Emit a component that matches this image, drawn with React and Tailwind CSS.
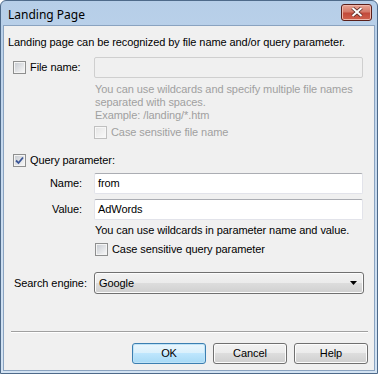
import React from 'react';

const Check = ({ checked = false, disabled = false }) => (
  <span
    className={`w-[13px] h-[13px] shrink-0 border p-[1px] flex ${
      disabled ? 'border-[#c0c0c0] bg-[#f7f7f7]' : 'border-[#8e8f8f] bg-[#f4f4f4]'
    }`}
  >
    <span
      className={`flex-1 flex items-center justify-center ${
        disabled
          ? 'bg-gradient-to-br from-[#e6e6e6] to-[#f8f8f8]'
          : 'bg-gradient-to-br from-[#c9cdd3] to-[#f6f6f6]'
      }`}
    >
      {checked && (
        <svg width="9" height="9" viewBox="0 0 9 9">
          <path d="M1 4.5 L3.5 7 L8 1.5" fill="none" stroke="#3b5697" strokeWidth="1.8" />
        </svg>
      )}
    </span>
  </span>
);

const TextBox = ({ value = '', disabled = false }) => (
  <div
    className={`w-[269px] h-[21px] rounded-[2px] border px-[3px] flex items-center ${
      disabled
        ? 'bg-[#f0f0f0] border-[#cfcfcf]'
        : 'bg-white border-[#e2e3ea] border-t-[#abadb3]'
    }`}
  >
    <span className="text-[11px] text-black leading-none">{value}</span>
  </div>
);

const Button = ({ children, def = false }) => (
  <button
    className={`w-[74px] h-[21px] rounded-[3px] border text-[11px] leading-none text-black ${
      def
        ? 'border-[#3c7fb1] bg-[linear-gradient(#eaf6fd_0%,#d9f0fc_50%,#bee6fd_50%,#a7d9f5_100%)] shadow-[inset_0_0_0_1px_#bfe3f7]'
        : 'border-[#707070] bg-[linear-gradient(#f2f2f2_0%,#ebebeb_50%,#dddddd_50%,#cfcfcf_100%)] shadow-[inset_0_0_0_1px_#fcfcfc]'
    }`}
  >
    {children}
  </button>
);

export default function App() {
  return (
    <div className="w-[378px] h-[374px] font-['Liberation_Sans',Arial,sans-serif]">
      <div className="w-full h-full flex flex-col rounded-t-[6px] border border-[#4e6a8a] bg-[linear-gradient(180deg,#b6cee8_0%,#c6d9ee_40%,#d3e3f3_100%)] px-[2px] pb-[2px]">
        {/* Title bar */}
        <div className="h-[24px] flex items-center justify-between pl-[5px] pr-[3px] shrink-0">
          <span className="font-['Noto_Sans',sans-serif] text-[12px] text-black leading-none mt-[3px]">
            Landing Page
          </span>
          <div className="w-[31px] h-[17px] -mt-[2px] rounded-[3px] border border-[#5a1f1a] bg-[linear-gradient(#e8a493_0%,#d47a6a_45%,#c24a3b_55%,#d0624e_100%)] flex items-center justify-center shadow-[inset_0_0_0_1px_#efb6aa]">
            <svg width="12" height="10" viewBox="0 0 12 10">
              <path d="M1.5 1 L10.5 9 M10.5 1 L1.5 9" stroke="#5a2a24" strokeWidth="3.6" />
              <path d="M1.5 1 L10.5 9 M10.5 1 L1.5 9" stroke="#ffffff" strokeWidth="2" />
            </svg>
          </div>
        </div>

        {/* Client area */}
        <div className="flex-1 border border-[#8aa3c0] bg-[#f0f0f0] flex flex-col text-[11px] text-black leading-[13px] tracking-[-0.08px]">
          <p className="mt-[10px] ml-[4px]">
            Landing page can be recognized by file name and/or query parameter.
          </p>

          {/* File name */}
          <div className="mt-[8px] flex items-center">
            <div className="w-[90px] flex items-center gap-[4px] pl-[9px]">
              <Check />
              <span>File name:</span>
            </div>
            <TextBox disabled />
          </div>
          <div className="ml-[91px] mt-[5px] text-[#a0a0a0] w-[268px]">
            <p>You can use wildcards and specify multiple file names</p>
            <p>separated with spaces.</p>
            <p>Example: /landing/*.htm</p>
          </div>
          <div className="ml-[90px] mt-[4px] flex items-center gap-[4px] text-[#a0a0a0]">
            <Check disabled />
            <span>Case sensitive file name</span>
          </div>

          {/* Query parameter */}
          <div className="mt-[15px] ml-[9px] flex items-center gap-[4px]">
            <Check checked />
            <span>Query parameter:</span>
          </div>
          <div className="mt-[6px] flex items-center">
            <span className="w-[90px] text-right pr-[12px]">Name:</span>
            <TextBox value="from" />
          </div>
          <div className="mt-[5px] flex items-center">
            <span className="w-[90px] text-right pr-[12px]">Value:</span>
            <TextBox value="AdWords" />
          </div>
          <p className="ml-[91px] mt-[4px]">You can use wildcards in parameter name and value.</p>
          <div className="ml-[91px] mt-[6px] flex items-center gap-[4px]">
            <Check />
            <span>Case sensitive query parameter</span>
          </div>

          {/* Search engine */}
          <div className="mt-[16px] flex items-center">
            <span className="w-[90px] pl-[10px]">Search engine:</span>
            <div className="w-[270px] h-[22px] rounded-[3px] border border-[#707070] bg-[linear-gradient(#f2f2f2_0%,#ebebeb_50%,#dddddd_50%,#cfcfcf_100%)] shadow-[inset_0_0_0_1px_#fcfcfc] flex items-center justify-between pl-[4px] pr-[6px]">
              <span>Google</span>
              <svg width="7" height="4" viewBox="0 0 7 4">
                <path d="M0 0 H7 L3.5 4 Z" fill="#000" />
              </svg>
            </div>
          </div>

          {/* Separator */}
          <div className="mt-[37px] ml-[7px] w-[357px] h-[2px] border-t border-[#a0a0a0] border-b border-b-white" />

          {/* Buttons */}
          <div className="mt-[10px] flex justify-end gap-[7px] pr-[6px]">
            <Button def>OK</Button>
            <Button>Cancel</Button>
            <Button>Help</Button>
          </div>
        </div>
      </div>
    </div>
  );
}
